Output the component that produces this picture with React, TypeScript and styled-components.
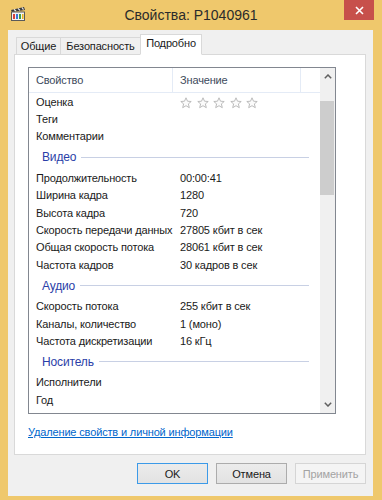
import React from 'react';
import styled, {createGlobalStyle} from 'styled-components';

const GlobalStyle = createGlobalStyle`
   html, body {
      margin: 0;
      padding: 0;
      background: #efc86c;
   }
   body {
      font-family: 'Liberation Sans', Arial, sans-serif;
      font-size: 11px;
      letter-spacing: -0.15px;
      color: #1a1a1a;
   }
`;

type Row =
   | {kind: 'row'; name: string; value?: string; stars?: boolean}
   | {kind: 'group'; title: string};

const rows: Row[] = [
   {kind: 'row', name: 'Оценка', stars: true},
   {kind: 'row', name: 'Теги'},
   {kind: 'row', name: 'Комментарии'},
   {kind: 'group', title: 'Видео'},
   {kind: 'row', name: 'Продолжительность', value: '00:00:41'},
   {kind: 'row', name: 'Ширина кадра', value: '1280'},
   {kind: 'row', name: 'Высота кадра', value: '720'},
   {kind: 'row', name: 'Скорость передачи данных', value: '27805 кбит в сек'},
   {kind: 'row', name: 'Общая скорость потока', value: '28061 кбит в сек'},
   {kind: 'row', name: 'Частота кадров', value: '30 кадров в сек'},
   {kind: 'group', title: 'Аудио'},
   {kind: 'row', name: 'Скорость потока', value: '255 кбит в сек'},
   {kind: 'row', name: 'Каналы, количество', value: '1 (моно)'},
   {kind: 'row', name: 'Частота дискретизации', value: '16 кГц'},
   {kind: 'group', title: 'Носитель'},
   {kind: 'row', name: 'Исполнители'},
   {kind: 'row', name: 'Год'},
   {kind: 'row', name: 'Жанр'},
];

// label + width in px, as on the reference
const tabs: [string, number][] = [
   ['Общие', 45],
   ['Безопасность', 81],
   ['Подробно', 62],
];

function AppIcon() {
   return (
      <svg width='16' height='15' viewBox='0 0 16 15'>
         {/* clapper top */}
         <path d='M1 4 L14 1 L15 4 L2 6 Z' fill='#3a3a3a' />
         <path d='M4 3.3 L6 5.2 M8 2.4 L10 4.4 M12 1.5 L13.5 3.6' stroke='#e8e8e8' strokeWidth='1.2' />
         {/* body */}
         <rect x='1.5' y='6' width='13' height='8.5' fill='#f4f4f4' stroke='#5a5a5a' />
         <rect x='3' y='8' width='2' height='5' fill='#d8413a' />
         <rect x='6' y='8' width='2' height='5' fill='#3c78d8' />
         <rect x='9' y='8' width='2' height='5' fill='#41a048' />
         <rect x='12' y='8' width='1.6' height='5' fill='#e6b422' />
      </svg>
   );
}

function Star() {
   return (
      <svg width='12' height='12' viewBox='0 0 12 12'>
         <path
            d='M6 0.8 L7.5 4.2 L11.2 4.5 L8.4 6.9 L9.3 10.7 L6 8.7 L2.7 10.7 L3.6 6.9 L0.8 4.5 L4.5 4.2 Z'
            fill='#fbfbfb'
            stroke='#b4b4b4'
            strokeWidth='0.9'
            strokeLinejoin='round'
         />
      </svg>
   );
}

function Chevron({up}: {up?: boolean}) {
   return (
      <svg width='8' height='5' viewBox='0 0 8 5'>
         <path
            d={up ? 'M0.8 4.2 L4 1 L7.2 4.2' : 'M0.8 0.8 L4 4 L7.2 0.8'}
            fill='none'
            stroke='#606060'
            strokeWidth='1.5'
         />
      </svg>
   );
}

export default function App() {
   return (
      <>
         <GlobalStyle />
         <Window>
            <TitleBar>
               <IconSlot>
                  <AppIcon />
               </IconSlot>
               <Title>Свойства: P1040961</Title>
               <CloseSlot>
                  <CloseButton>
                     <svg width='9' height='9' viewBox='0 0 9 9'>
                        <path d='M1 1 L8 8 M8 1 L1 8' stroke='#fff' strokeWidth='1.6' />
                     </svg>
                  </CloseButton>
               </CloseSlot>
            </TitleBar>

            <Body>
               <TabStrip>
                  {tabs.map(([t, w], i) => (
                     <Tab key={t} $width={w} $active={i === 2}>
                        {t}
                     </Tab>
                  ))}
               </TabStrip>

               <Panel>
                  <ListBox>
                     <ListMain>
                        <Header>
                           <HeaderCell $width={144}>Свойство</HeaderCell>
                           <HeaderCell $width={128}>Значение</HeaderCell>
                           <HeaderRest />
                        </Header>
                        <Rows>
                           {rows.map((r, i) =>
                              r.kind === 'group' ? (
                                 <GroupRow key={i}>
                                    <GroupTitle>{r.title}</GroupTitle>
                                    <GroupLine />
                                 </GroupRow>
                              ) : (
                                 <ItemRow key={i}>
                                    <NameCell>{r.name}</NameCell>
                                    <ValueCell>
                                       {r.stars ? (
                                          <Stars>
                                             {[0, 1, 2, 3, 4].map(s => (
                                                <Star key={s} />
                                             ))}
                                          </Stars>
                                       ) : (
                                          r.value
                                       )}
                                    </ValueCell>
                                 </ItemRow>
                              )
                           )}
                        </Rows>
                     </ListMain>
                     <ScrollBar>
                        <ArrowButton>
                           <Chevron up />
                        </ArrowButton>
                        <Track>
                           <Thumb />
                        </Track>
                        <ArrowButton>
                           <Chevron />
                        </ArrowButton>
                     </ScrollBar>
                  </ListBox>
                  <RemoveLink>Удаление свойств и личной информации</RemoveLink>
               </Panel>

               <ButtonRow>
                  <DialogButton $variant='default'>OK</DialogButton>
                  <DialogButton>Отмена</DialogButton>
                  <DialogButton $variant='disabled'>Применить</DialogButton>
               </ButtonRow>
            </Body>
         </Window>
      </>
   );
}

const Window = styled.div`
   display: flex;
   flex-direction: column;
   width: 382px;
   height: 500px;
   background: #efc86c;
   overflow: hidden;
`;

const TitleBar = styled.div`
   display: grid;
   grid-template-columns: 1fr auto 1fr;
   align-items: start;
   height: 30px;
   flex-shrink: 0;
`;

const IconSlot = styled.div`
   display: flex;
   padding: 6px 0 0 10px;
`;

const Title = styled.div`
   padding-top: 5px;
   font-size: 14px;
   letter-spacing: 0;
   line-height: 20px;
   color: #2b2b2b;
   white-space: nowrap;
`;

const CloseSlot = styled.div`
   display: flex;
   justify-content: flex-end;
   padding-right: 8px;
`;

const CloseButton = styled.div`
   display: flex;
   align-items: center;
   justify-content: center;
   width: 30px;
   height: 20px;
   background: #c7504b;
`;

const Body = styled.div`
   display: flex;
   flex-direction: column;
   flex: 1;
   margin: 0 9px 4px 8px;
   padding: 5px 7px 0 6px;
   background: #f0f0f0;
`;

const TabStrip = styled.div`
   display: flex;
   align-items: flex-end;
   height: 20px;
   padding-left: 2px;
   margin-bottom: -1px;
   position: relative;
   z-index: 1;
`;

const Tab = styled.div<{$active?: boolean; $width: number}>`
   display: flex;
   align-items: center;
   justify-content: center;
   width: ${p => p.$width}px;
   height: ${p => (p.$active ? '21px' : '18px')};
   padding-bottom: ${p => (p.$active ? '3px' : '0')};
   margin-left: -1px;
   box-sizing: border-box;
   border: 1px solid #d9d9d9;
   border-bottom: ${p => (p.$active ? '1px solid #fff' : '1px solid #d9d9d9')};
   background: ${p => (p.$active ? '#fff' : '#f0f0f0')};
   color: #1a1a1a;
   white-space: nowrap;

   &:first-child {
      margin-left: 0;
   }
`;

const Panel = styled.div`
   display: flex;
   flex-direction: column;
   height: 401px;
   box-sizing: border-box;
   padding: 12px 0 0 13px;
   background: #fff;
   border: 1px solid #d9d9d9;
`;

const ListBox = styled.div`
   display: flex;
   width: 308px;
   height: 347px;
   box-sizing: border-box;
   border: 1px solid #828790;
   background: #fff;
   overflow: hidden;
`;

const ListMain = styled.div`
   display: flex;
   flex-direction: column;
   width: 291px;
   overflow: hidden;
`;

const Header = styled.div`
   display: flex;
   flex-shrink: 0;
   height: 24px;
   border-bottom: 1px solid #e4ebf6;
`;

const HeaderCell = styled.div<{$width: number}>`
   display: flex;
   align-items: center;
   width: ${p => p.$width}px;
   padding-left: 7px;
   box-sizing: border-box;
   border-right: 1px solid #e4ebf6;
   color: #3d4a5c;
`;

const HeaderRest = styled.div`
   flex: 1;
`;

const Rows = styled.div`
   display: flex;
   flex-direction: column;
   overflow: hidden;
`;

const ItemRow = styled.div`
   display: flex;
   align-items: center;
   flex-shrink: 0;
   height: 17.4px;
   white-space: nowrap;
`;

const NameCell = styled.div`
   width: 145px;
   padding-left: 7px;
   box-sizing: border-box;
   overflow: hidden;
`;

const ValueCell = styled.div`
   flex: 1;
   padding-left: 6px;
`;

const Stars = styled.div`
   display: flex;
   gap: 4.6px;
   padding-top: 2px;
`;

const GroupRow = styled.div`
   display: flex;
   align-items: center;
   flex-shrink: 0;
   height: 24px;
   padding: 0 11px 0 13px;
`;

const GroupTitle = styled.div`
   color: #2a3ea8;
   font-size: 12px;
`;

const GroupLine = styled.div`
   flex: 1;
   height: 1px;
   margin-left: 5px;
   background: #c8d0e4;
`;

const ScrollBar = styled.div`
   display: flex;
   flex-direction: column;
   width: 15px;
   background: #f0f0f0;
`;

const ArrowButton = styled.div`
   display: flex;
   align-items: center;
   justify-content: center;
   height: 17px;
   flex-shrink: 0;
`;

const Track = styled.div`
   flex: 1;
   padding-top: 16px;
`;

const Thumb = styled.div`
   height: 94px;
   margin: 0 1px 0 0;
   background: #cdcdcd;
`;

const RemoveLink = styled.a`
   margin-top: 10px;
   line-height: 16px;
   color: #0066cc;
   text-decoration: underline;
   cursor: pointer;
`;

const ButtonRow = styled.div`
   display: flex;
   justify-content: flex-end;
   gap: 8px;
   margin-top: 8px;
`;

const DialogButton = styled.div<{$variant?: 'default' | 'disabled'}>`
   display: flex;
   align-items: center;
   justify-content: center;
   width: 71px;
   height: 21px;
   box-sizing: border-box;
   border: 1px solid
      ${p =>
         p.$variant === 'default'
            ? '#3c9ae8'
            : p.$variant === 'disabled'
            ? '#d5d5d5'
            : '#acacac'};
   background: ${p =>
      p.$variant === 'disabled'
         ? '#f4f4f4'
         : 'linear-gradient(#ececec, #e2e2e2)'};
   color: ${p => (p.$variant === 'disabled' ? '#a3a3a3' : '#1a1a1a')};
`;
